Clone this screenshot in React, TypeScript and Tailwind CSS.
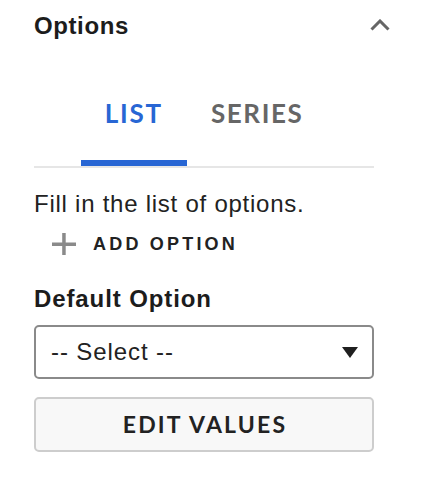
import React from "react";

export default function App() {
  const sans = { fontFamily: '"Liberation Sans", Arial, sans-serif' };
  const tabFont = { fontFamily: 'Lato, "Open Sans", sans-serif' };
  return (
    <div className="w-[422px] h-[478px] bg-white text-[#1c1c1c]" style={sans}>
      <div className="flex items-center justify-between pl-[34px] pr-[32px] pt-[12px]">
        <div className="text-[24px] leading-[28px] font-bold tracking-[0.6px]">Options</div>
        <svg width="20" height="12" viewBox="0 0 20 12" className="mt-[-2px]">
          <polyline points="1.5,10.5 10,2 18.5,10.5" fill="none" stroke="#666" strokeWidth="3" />
        </svg>
      </div>
      <div className="pl-[34px] pr-[48px]">
        <div className="flex justify-center border-b-2 border-[#e6e6e6] mt-[58px]" style={tabFont}>
          <div className="px-[24px] pb-[31px] border-b-[6px] border-[#2866d4] text-[#2866d4] text-[26px] leading-[31px] font-bold tracking-[1.8px]">
            LIST
          </div>
          <div className="px-[24px] pb-[31px] border-b-[6px] border-transparent text-[#666666] text-[26px] leading-[31px] font-bold tracking-[1.6px]">
            SERIES
          </div>
        </div>
        <div className="mt-[22px] text-[24px] leading-[28px] tracking-[0.75px] text-[#222]">
          Fill in the list of options.
        </div>
        <div className="flex items-center mt-[14px] pl-[18px] h-[24px]">
          <svg width="24" height="22" viewBox="0 0 24 22">
            <rect x="0" y="9.5" width="24" height="3.5" fill="#8a8a8a" />
            <rect x="10.2" y="0" width="3.5" height="22" fill="#8a8a8a" />
          </svg>
          <span className="ml-[17px] text-[18px] leading-[24px] font-bold tracking-[3.2px] text-[#222]">
            ADD OPTION
          </span>
        </div>
        <div className="mt-[29px] text-[24px] leading-[28px] font-bold tracking-[0.9px] text-[#1c1c1c]">
          Default Option
        </div>
        <div className="mt-[12px] h-[54px] border-2 border-[#8a8a8a] rounded-[5px] flex items-center justify-between pl-[15px] pr-[14px]">
          <span className="text-[24px] leading-[28px] tracking-[0.9px] text-[#222]">-- Select --</span>
          <svg width="16" height="11" viewBox="0 0 16 11">
            <polygon points="0,0 16,0 8,11" fill="#1f1f1f" />
          </svg>
        </div>
        <div
          className="mt-[18px] h-[55px] border-2 border-[#cdcdcd] rounded-[5px] bg-[#f8f8f8] flex items-center justify-center pl-[2px] text-[23px] font-bold tracking-[2.2px] text-[#222]"
          style={tabFont}
        >
          EDIT VALUES
        </div>
      </div>
    </div>
  );
}
